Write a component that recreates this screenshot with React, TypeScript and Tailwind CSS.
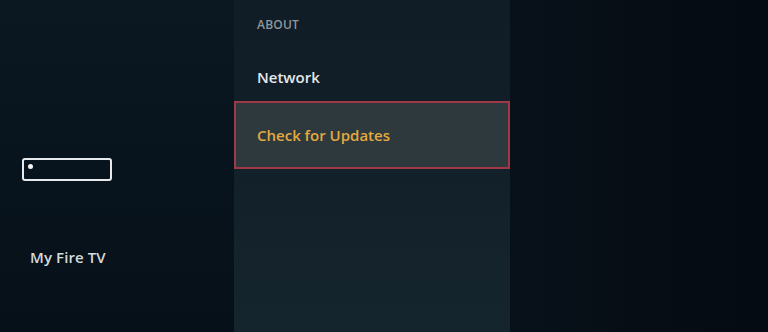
import React from "react";

const font = { fontFamily: '"Open Sans", "Noto Sans", sans-serif' };

function SearchBox() {
  return (
    <div className="relative w-[90px] h-[23px] border-2 border-[#e6eaec] rounded-[3px]">
      <span className="absolute left-[4px] top-[4px] w-[5px] h-[5px] rounded-full bg-[#f2f4f5]" />
    </div>
  );
}

export default function App() {
  return (
    <div
      className="flex w-[768px] h-[332px] overflow-hidden bg-[#060c13]"
      style={font}
    >
      {/* Sidebar */}
      <div className="w-[234px] h-full bg-gradient-to-b from-[#0b1821] via-[#08141d] to-[#061019] flex flex-col">
        <div className="pl-[22px] pt-[158px]">
          <SearchBox />
        </div>
        <div className="pl-[30px] pt-[65px] text-[15px] text-[#d5dadd] font-semibold tracking-[0.1px]">
          My Fire TV
        </div>
      </div>

      {/* Settings list */}
      <div className="w-[276px] h-full bg-gradient-to-b from-[#101c26] via-[#12202a] to-[#15252d] flex flex-col">
        <div className="pl-[23px] pt-[16px] h-[51px] text-[12px] text-[#8e979c] font-semibold tracking-[0.2px]">
          ABOUT
        </div>
        <div className="pl-[23px] h-[50px] pt-[16px] text-[15px] text-[#e4e8ea] font-semibold leading-[20px]">
          Network
        </div>
        <div className="h-[68px] border-2 border-[#a13848] bg-[#2e393e] flex items-center pl-[21px] text-[15px] text-[#e3a93f] font-semibold">
          Check for Updates
        </div>
      </div>

      {/* Detail panel */}
      <div className="flex-1 h-full bg-gradient-to-r from-[#08111a] via-[#060d15] to-[#050b12]" />
    </div>
  );
}
